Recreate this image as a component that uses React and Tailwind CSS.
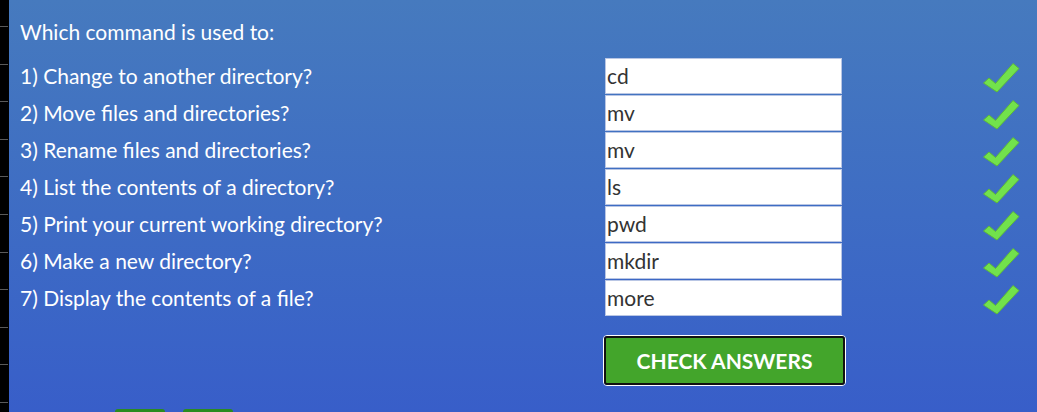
import React from "react";

const rows = [
  ["1) Change to another directory?", "cd"],
  ["2) Move files and directories?", "mv"],
  ["3) Rename files and directories?", "mv"],
  ["4) List the contents of a directory?", "ls"],
  ["5) Print your current working directory?", "pwd"],
  ["6) Make a new directory?", "mkdir"],
  ["7) Display the contents of a file?", "more"],
];

const lineYs = [26, 64, 101, 139, 176, 214, 252, 289, 327, 364, 402];

function Check() {
  return (
    <svg width="38" height="31" viewBox="0 0 38 31" className="block">
      <path
        d="M1.5 21 L7 16 L13.5 21.5 L31 1.5 L37 6.5 L15 30 Z"
        fill="#72e24c"
        stroke="#5db93a"
        strokeWidth="1"
        strokeLinejoin="round"
      />
    </svg>
  );
}

export default function App() {
  return (
    <div
      className="flex w-[1037px] h-[412px] overflow-hidden"
      style={{ fontFamily: "Lato, 'Open Sans', sans-serif" }}
    >
      <div className="relative w-[9px] h-full bg-black shrink-0">
        {lineYs.map((y) => (
          <div
            key={y}
            className="absolute left-0 w-[8px] h-px bg-[#5a5a5a]"
            style={{ top: y }}
          />
        ))}
      </div>
      <div className="relative flex-1 h-full bg-gradient-to-b from-[#467abe] to-[#385ec9] pl-[11px] pt-[13px] text-white">
        <div className="h-[37px] flex items-center text-[21px]">
          Which command is used to:
        </div>
        <div className="mt-[7px] flex flex-col">
          {rows.map(([q, a], i) => (
            <div key={i} className="flex items-center h-[37px]">
              <div className="w-[585px] text-[21px]">{q}</div>
              <div className="w-[237px] h-[36px] bg-white border border-[#b9c6e4] flex items-center pl-[1px] text-[21px] text-[#333333]">
                {a}
              </div>
              <div className="ml-[140px] mt-[3px]">
                <Check />
              </div>
            </div>
          ))}
        </div>
        <div className="mt-[19px] ml-[583px] w-[243px] h-[51px] rounded-[4px] border border-white">
          <div className="w-full h-full rounded-[3px] border-2 border-[#111111] bg-[#43a52b] flex items-center justify-center text-[21px] font-bold text-white">
            CHECK ANSWERS
          </div>
        </div>
        <div className="absolute left-[106px] top-[409px] w-[50px] h-[6px] rounded-t-[3px] bg-[#2a8b1e]" />
        <div className="absolute left-[174px] top-[409px] w-[50px] h-[6px] rounded-t-[3px] bg-[#2a8b1e]" />
      </div>
    </div>
  );
}
